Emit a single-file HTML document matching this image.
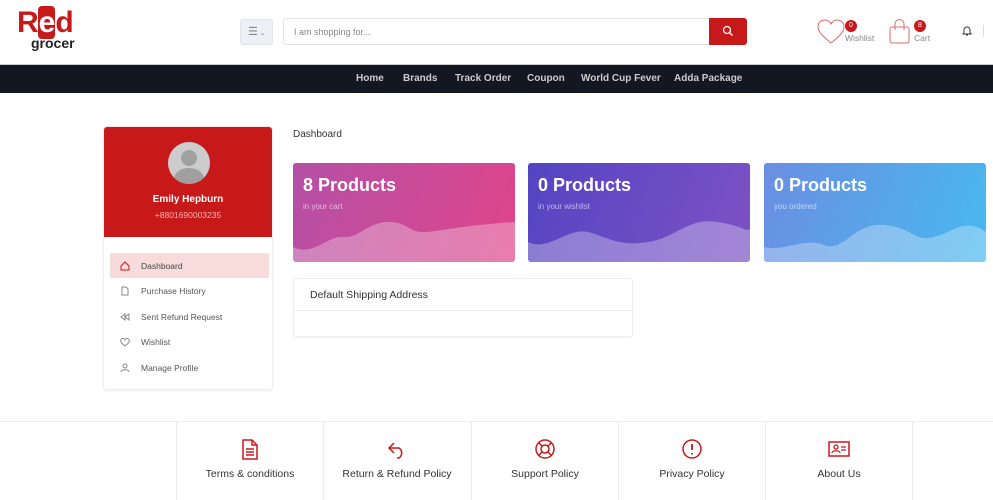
<!DOCTYPE html>
<html><head><meta charset="utf-8"><style>
*{box-sizing:border-box;margin:0;padding:0}
body{width:993px;height:500px;overflow:hidden;background:#fff;font-family:"Liberation Sans",sans-serif;color:#333;position:relative}
.abs{position:absolute}
.nav{top:64px;left:0;width:993px;height:29px;background:#131722;border-top:1px solid #ccc}
.nav span{position:absolute;top:8px;color:#ccc;font-size:10px;font-weight:bold}
.card{position:absolute;top:163px;width:222px;height:99px;border-radius:3px;overflow:hidden;color:#fff}
.card h2{position:absolute;left:10px;top:12px;font-size:18px;font-weight:bold}
.card p{position:absolute;left:10px;top:39px;font-size:8px;opacity:.6}
.card svg{position:absolute;left:0;bottom:0}
.menu div{position:absolute;left:6px;width:159px;height:25px;font-size:8.5px;color:#555;padding:8px 0 0 31px;border-radius:2px}
.menu svg{position:absolute;left:10px;top:8px}
.fc{position:absolute;top:422px;width:147px;height:78px;border-left:1px solid #e8e8ee;text-align:center;font-size:10.5px;color:#333}
.fc svg{position:absolute;left:62px;top:16px}
.fc span{position:absolute;left:0;right:0;top:46px}
</style></head><body>
<!-- logo -->
<div class="abs" style="left:17px;top:8px;font-size:30px;font-weight:bold;color:#c8191a;letter-spacing:-1px;line-height:30px">R<span style="background:#c8191a;color:#fff;border-radius:4px;padding:0 1px">e</span>d</div>
<div class="abs" style="left:31px;top:35px;font-size:14px;font-weight:bold;color:#222">grocer</div>
<div class="abs" style="left:240px;top:19px;width:33px;height:26px;background:#eef0f5;border:1px solid #e2e4ea;border-radius:3px;font-size:11px;color:#888;padding:5px 0 0 7px">☰<span style="font-size:7px"> ⌄</span></div>
<div class="abs" style="left:283px;top:18px;width:427px;height:27px;border:1px solid #e3e3e3;border-radius:3px 0 0 3px;font-size:9px;color:#888;padding:8px 0 0 10px">I am shopping for...</div>
<div class="abs" style="left:709px;top:18px;width:38px;height:27px;background:#c8191a;border-radius:0 3px 3px 0"><svg width="38" height="27"><circle cx="18" cy="12" r="3.5" fill="none" stroke="#fff" stroke-width="1.3"/><path d="M20.5 14.5l3 3" stroke="#fff" stroke-width="1.3"/></svg></div>
<svg class="abs" style="left:817px;top:19px" width="28" height="26"><path d="M14 24C4 16 1 12 1 7.5 1 3 5 1 8 1c3 0 5 2 6 4 1-2 3-4 6-4 3 0 7 2 7 6.5C27 12 24 16 14 24z" fill="none" stroke="#e06a6a" stroke-width="1"/></svg>
<div class="abs" style="left:845px;top:20px;width:12px;height:12px;border-radius:6px;background:#c8191a;color:#fff;font-size:7px;text-align:center;line-height:12px">0</div>
<div class="abs" style="left:845px;top:33px;font-size:8.5px;color:#888">Wishlist</div>
<svg class="abs" style="left:889px;top:19px" width="22" height="25"><rect x="1" y="8" width="19" height="16" rx="2" fill="none" stroke="#e06a6a"/><path d="M6 11V5a4.5 4.5 0 0 1 9 0v6" fill="none" stroke="#e06a6a"/></svg>
<div class="abs" style="left:914px;top:20px;width:12px;height:12px;border-radius:6px;background:#c8191a;color:#fff;font-size:7px;text-align:center;line-height:12px">8</div>
<div class="abs" style="left:914px;top:33px;font-size:8.5px;color:#888">Cart</div>
<svg class="abs" style="left:962px;top:25px" width="10" height="11"><path d="M2 8V5a3 3 0 0 1 6 0v3l1 1H1z M4 10h2" fill="none" stroke="#333" stroke-width="1"/></svg>
<div class="abs" style="left:983px;top:25px;width:1px;height:12px;background:#ddd"></div>
<div class="abs nav"><span style="left:356px">Home</span><span style="left:403px">Brands</span><span style="left:455px">Track Order</span><span style="left:527px">Coupon</span><span style="left:581px">World Cup Fever</span><span style="left:674px">Adda Package</span></div>
<!-- sidebar -->
<div class="abs" style="left:103px;top:126px;width:170px;height:264px;border:1px solid #eee;border-radius:3px;box-shadow:0 1px 3px rgba(0,0,0,.06)">
<div style="height:110px;background:#c8191a;position:relative;border-radius:3px 3px 0 0">
<div class="abs" style="left:64px;top:15px;width:42px;height:42px;border-radius:21px;background:#ccc;overflow:hidden"><svg width="42" height="42"><circle cx="21" cy="16" r="8" fill="#a0a0a0"/><path d="M5 42c0-12 8-16 16-16s16 4 16 16z" fill="#a0a0a0"/></svg></div>
<div class="abs" style="left:0;right:0;top:67px;text-align:center;color:#fff;font-size:10px;font-weight:bold">Emily Hepburn</div>
<div class="abs" style="left:0;right:0;top:83px;text-align:center;color:#f3b0b0;font-size:8.5px">+8801690003235</div>
</div>
<div class="menu">
<div style="top:126px;background:#f8dcdc;color:#444"><svg width="10" height="10"><path d="M1 5L5 1l4 4v4H1z" fill="none" stroke="#c8191a"/></svg>Dashboard</div>
<div style="top:151px"><svg width="10" height="10"><path d="M2 1h4l2 2v6H2z" fill="none" stroke="#888"/></svg>Purchase History</div>
<div style="top:177px"><svg width="10" height="10"><path d="M5 2L1 5l4 3zM9 2L5 5l4 3z" fill="none" stroke="#888"/></svg>Sent Refund Request</div>
<div style="top:202px"><svg width="10" height="10"><path d="M5 9C1 6 0 4 1 2.5S4 1 5 3c1-2 3-2 4-.5S9 6 5 9z" fill="none" stroke="#888"/></svg>Wishlist</div>
<div style="top:228px"><svg width="10" height="10"><circle cx="5" cy="3" r="2" fill="none" stroke="#888"/><path d="M1 9c0-3 8-3 8 0" fill="none" stroke="#888"/></svg>Manage Profile</div>
</div></div>
<div class="abs" style="left:293px;top:129px;font-size:10px;color:#333">Dashboard</div>
<div class="card" style="left:293px;background:linear-gradient(110deg,#b450a6,#e0458a)"><h2>8 Products</h2><p>in your cart</p><svg width="222" height="45" viewBox="0 0 222 45"><path d="M0 30C20 40 35 18 50 20S75 5 95 5S115 15 130 15S170 8 222 5V45H0z" fill="rgba(255,255,255,.3)"/></svg></div>
<div class="card" style="left:528px;background:linear-gradient(110deg,#5544c2,#7d52c4)"><h2>0 Products</h2><p>in your wishlist</p><svg width="222" height="45" viewBox="0 0 222 45"><path d="M0 25C20 35 40 10 60 15S90 30 120 25S160 0 190 5S215 15 222 12V45H0z" fill="rgba(255,255,255,.3)"/></svg></div>
<div class="card" style="left:764px;background:linear-gradient(110deg,#6b8ee2,#47b9ef)"><h2>0 Products</h2><p>you ordered</p><svg width="222" height="45" viewBox="0 0 222 45"><path d="M0 30C20 35 40 20 60 28S90 5 120 8S150 25 170 20S200 0 222 15V45H0z" fill="rgba(255,255,255,.3)"/></svg></div>
<div class="abs" style="left:293px;top:278px;width:340px;height:59px;border:1px solid #eee;border-radius:3px;box-shadow:0 1px 3px rgba(0,0,0,.05)"><div style="height:32px;border-bottom:1px solid #eee;padding:10px 0 0 16px;font-size:10.5px;color:#333">Default Shipping Address</div></div>
<!-- footer -->
<div class="abs" style="left:0;top:421px;width:993px;height:1px;background:#ececf2"></div>
<div class="fc" style="left:176px"><svg width="22" height="22"><path d="M4 2h9l5 5v14H4z M13 2v5h5 M7 11h8 M7 14h8 M7 17h8" fill="none" stroke="#c8191a" stroke-width="1.5"/></svg><span>Terms &amp; conditions</span></div>
<div class="fc" style="left:323px"><svg width="22" height="22"><path d="M8 5L3 10l5 5 M3 10h10a6 6 0 0 1 0 10h-2" fill="none" stroke="#c8191a" stroke-width="1.5"/></svg><span>Return &amp; Refund Policy</span></div>
<div class="fc" style="left:471px"><svg width="22" height="22"><circle cx="11" cy="11" r="9" fill="none" stroke="#c8191a" stroke-width="1.5"/><circle cx="11" cy="11" r="4" fill="none" stroke="#c8191a" stroke-width="1.5"/><path d="M8 8L5 5M14 8l3-3M8 14l-3 3M14 14l3 3" stroke="#c8191a" stroke-width="1.5"/></svg><span>Support Policy</span></div>
<div class="fc" style="left:618px"><svg width="22" height="22"><circle cx="11" cy="11" r="9" fill="none" stroke="#c8191a" stroke-width="1.5"/><path d="M11 6v6M11 15v1.5" stroke="#c8191a" stroke-width="1.8"/></svg><span>Privacy Policy</span></div>
<div class="fc" style="left:765px"><svg width="22" height="22"><rect x="1" y="4" width="20" height="14" fill="none" stroke="#c8191a" stroke-width="1.5"/><circle cx="8" cy="9" r="2" fill="none" stroke="#c8191a" stroke-width="1.3"/><path d="M4 15c0-3 8-3 8 0M13 9h5M13 12h5" fill="none" stroke="#c8191a" stroke-width="1.3"/></svg><span>About Us</span></div>
<div class="fc" style="left:912px"></div>
</body></html>
